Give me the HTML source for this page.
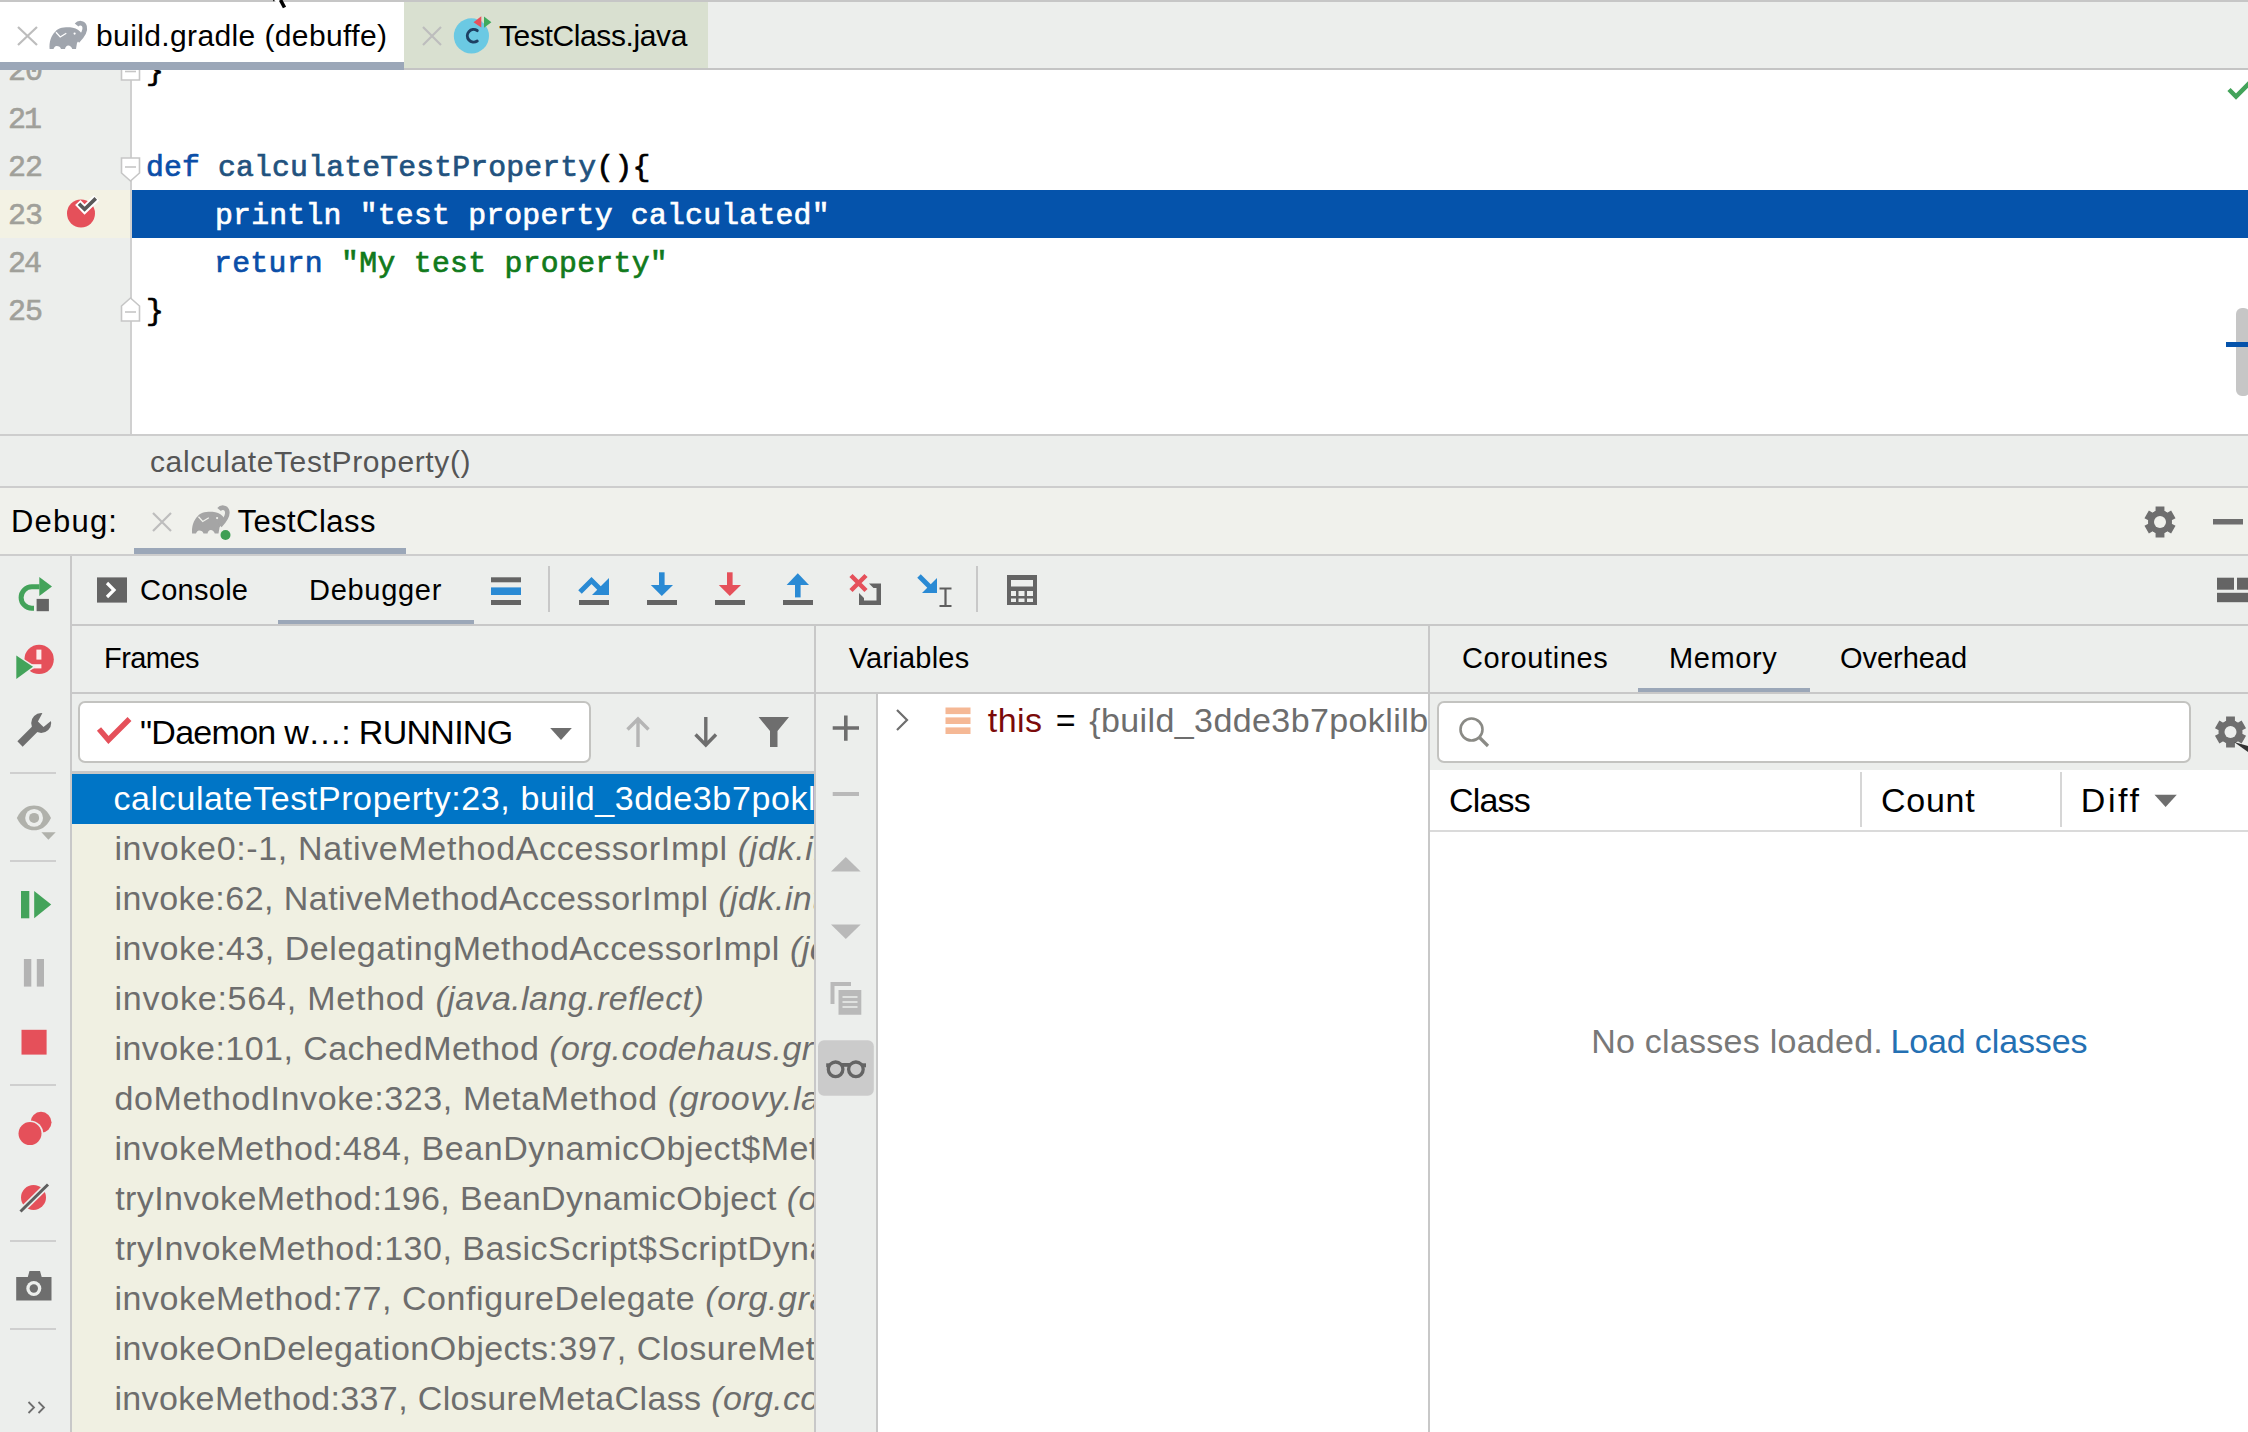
<!DOCTYPE html><html><head><meta charset="utf-8"><title>Debug</title><style>html,body{margin:0;padding:0;width:2248px;height:1432px;overflow:hidden;background:#eceeec}svg{display:block}</style></head><body>
<svg width="2248" height="1432" viewBox="0 0 2248 1432"><defs><clipPath id="clipEd"><rect x="0" y="70" width="2248" height="364"/></clipPath><clipPath id="clipFr"><rect x="72" y="774" width="742" height="658"/></clipPath><clipPath id="clipVar"><rect x="878" y="694" width="550" height="738"/></clipPath></defs>
<rect x="0" y="0" width="2248" height="1432" fill="#eceeec" />
<rect x="0" y="0" width="2248" height="2" fill="#c6c6c6" />
<rect x="0" y="2" width="404" height="60" fill="#ffffff" />
<rect x="0" y="62" width="404" height="8" fill="#9ba7b8" />
<rect x="404" y="2" width="304" height="66" fill="#d9e0d0" />
<rect x="404" y="68" width="1844" height="2" fill="#c4c4c4" />
<rect x="0" y="70" width="130" height="364" fill="#eceeec" />
<rect x="0" y="190" width="130" height="48" fill="#f3f2e4" />
<rect x="130" y="70" width="2" height="364" fill="#d0d0d0" />
<rect x="132" y="70" width="2116" height="364" fill="#ffffff" />
<rect x="132" y="190" width="2116" height="48" fill="#0553ab" />
<rect x="0" y="434" width="2248" height="2" fill="#cdcdcd" />
<rect x="0" y="486" width="2248" height="2" fill="#cdcdcd" />
<rect x="0" y="488" width="2248" height="66" fill="#f0f1ec" />
<rect x="134" y="548" width="272" height="7" fill="#9ba7b8" />
<rect x="0" y="554" width="2248" height="2" fill="#cdcdcd" />
<rect x="70" y="556" width="2" height="876" fill="#c8c8c8" />
<rect x="278" y="620" width="196" height="6" fill="#9ba7b8" />
<rect x="72" y="624" width="2176" height="2" fill="#c8c8c8" />
<rect x="72" y="692" width="742" height="2" fill="#c8c8c8" />
<rect x="79" y="702" width="511" height="60" fill="#ffffff" rx="6" stroke="#c3c3c0" stroke-width="2"/>
<rect x="72" y="771" width="742" height="3" fill="#c8c8c8" />
<rect x="72" y="774" width="742" height="658" fill="#f0f0e2" />
<rect x="72" y="774" width="742" height="50" fill="#0075c6" />
<rect x="814" y="626" width="2" height="806" fill="#c8c8c8" />
<rect x="816" y="692" width="612" height="2" fill="#c8c8c8" />
<rect x="876" y="694" width="2" height="738" fill="#c8c8c8" />
<rect x="878" y="694" width="550" height="738" fill="#ffffff" />
<rect x="1428" y="626" width="2" height="806" fill="#c8c8c8" />
<rect x="1638" y="688" width="172" height="6" fill="#9ba7b8" />
<rect x="1430" y="692" width="818" height="2" fill="#c8c8c8" />
<rect x="1438" y="702" width="752" height="60" fill="#ffffff" rx="6" stroke="#c3c3c0" stroke-width="2"/>
<rect x="1430" y="770" width="818" height="662" fill="#ffffff" />
<rect x="1860" y="772" width="2" height="55" fill="#d6d6d6" />
<rect x="2060" y="772" width="2" height="55" fill="#d6d6d6" />
<rect x="1430" y="830" width="818" height="2" fill="#dadada" />
<rect x="2236" y="308" width="14" height="88" fill="#c6c6c6" rx="6"/>
<rect x="2226" y="342" width="22" height="5" fill="#0553ab" />
<text id="tab1" x="96.00" y="46" font-family="Liberation Sans" font-size="30" xml:space="preserve" textLength="290.98" lengthAdjust="spacing"><tspan fill="#000000">build.gradle (debuffe)</tspan></text>
<text id="tab2" x="499.00" y="46" font-family="Liberation Sans" font-size="30" xml:space="preserve" textLength="188.41" lengthAdjust="spacing"><tspan fill="#000000">TestClass.java</tspan></text>
<text id="ln20" x="8.00" y="80" font-family="Liberation Mono" font-size="30" xml:space="preserve" textLength="35.02" lengthAdjust="spacing" clip-path="url(#clipEd)"><tspan fill="#a0a09a" stroke="#a0a09a" stroke-width="0.6">20</tspan></text>
<text id="ln21" x="8.00" y="128" font-family="Liberation Mono" font-size="30" xml:space="preserve" textLength="34.02" lengthAdjust="spacing" clip-path="url(#clipEd)"><tspan fill="#a0a09a" stroke="#a0a09a" stroke-width="0.6">21</tspan></text>
<text id="ln22" x="8.00" y="176" font-family="Liberation Mono" font-size="30" xml:space="preserve" textLength="35.02" lengthAdjust="spacing" clip-path="url(#clipEd)"><tspan fill="#a0a09a" stroke="#a0a09a" stroke-width="0.6">22</tspan></text>
<text id="ln23" x="8.00" y="224" font-family="Liberation Mono" font-size="30" xml:space="preserve" textLength="35.02" lengthAdjust="spacing" clip-path="url(#clipEd)"><tspan fill="#a0a09a" stroke="#a0a09a" stroke-width="0.6">23</tspan></text>
<text id="ln24" x="8.00" y="272" font-family="Liberation Mono" font-size="30" xml:space="preserve" textLength="34.02" lengthAdjust="spacing" clip-path="url(#clipEd)"><tspan fill="#a0a09a" stroke="#a0a09a" stroke-width="0.6">24</tspan></text>
<text id="ln25" x="8.00" y="320" font-family="Liberation Mono" font-size="30" xml:space="preserve" textLength="35.02" lengthAdjust="spacing" clip-path="url(#clipEd)"><tspan fill="#a0a09a" stroke="#a0a09a" stroke-width="0.6">25</tspan></text>
<text id="l20" x="146.00" y="80" font-family="Liberation Mono" font-size="29.78" xml:space="preserve" clip-path="url(#clipEd)"><tspan fill="#000000" stroke="#000000" stroke-width="0.7">}</tspan></text>
<text id="l22" x="146.00" y="176" font-family="Liberation Mono" font-size="29.78" xml:space="preserve" textLength="504.27" lengthAdjust="spacing"><tspan fill="#0b4ea8" stroke="#0b4ea8" stroke-width="0.7">def</tspan><tspan fill="#000000" stroke="#000000" stroke-width="0.7"> </tspan><tspan fill="#22527e" stroke="#22527e" stroke-width="0.7">calculateTestProperty</tspan><tspan fill="#000000" stroke="#000000" stroke-width="0.7">(){</tspan></text>
<text id="l23" x="215.00" y="224" font-family="Liberation Mono" font-size="29.78" xml:space="preserve" textLength="614.53" lengthAdjust="spacing"><tspan fill="#ffffff" stroke="#ffffff" stroke-width="0.7">println &quot;test property calculated&quot;</tspan></text>
<text id="l24" x="214.00" y="272" font-family="Liberation Mono" font-size="29.78" xml:space="preserve" textLength="453.69" lengthAdjust="spacing"><tspan fill="#0b4ea8" stroke="#0b4ea8" stroke-width="0.7">return</tspan><tspan fill="#000000" stroke="#000000" stroke-width="0.7"> </tspan><tspan fill="#117a1c" stroke="#117a1c" stroke-width="0.7">&quot;My test property&quot;</tspan></text>
<text id="l25" x="146.00" y="320" font-family="Liberation Mono" font-size="29.78" xml:space="preserve"><tspan fill="#000000" stroke="#000000" stroke-width="0.7">}</tspan></text>
<text id="crumb" x="150.00" y="472" font-family="Liberation Sans" font-size="30" xml:space="preserve" textLength="320.50" lengthAdjust="spacing"><tspan fill="#555555">calculateTestProperty()</tspan></text>
<text id="debug" x="11.00" y="532" font-family="Liberation Sans" font-size="31" xml:space="preserve" textLength="105.97" lengthAdjust="spacing"><tspan fill="#000000">Debug:</tspan></text>
<text id="testclass" x="237.50" y="532" font-family="Liberation Sans" font-size="31" xml:space="preserve" textLength="137.88" lengthAdjust="spacing"><tspan fill="#000000">TestClass</tspan></text>
<text id="console" x="140.00" y="599.5" font-family="Liberation Sans" font-size="29" xml:space="preserve" textLength="108.01" lengthAdjust="spacing"><tspan fill="#000000">Console</tspan></text>
<text id="debugger" x="309.00" y="599.5" font-family="Liberation Sans" font-size="29" xml:space="preserve" textLength="132.38" lengthAdjust="spacing"><tspan fill="#000000">Debugger</tspan></text>
<text id="frames" x="104.00" y="668" font-family="Liberation Sans" font-size="29" xml:space="preserve" textLength="95.50" lengthAdjust="spacing"><tspan fill="#000000">Frames</tspan></text>
<text id="variables" x="848.70" y="668" font-family="Liberation Sans" font-size="29" xml:space="preserve" textLength="120.45" lengthAdjust="spacing"><tspan fill="#000000">Variables</tspan></text>
<text id="coroutines" x="1462.00" y="668" font-family="Liberation Sans" font-size="29" xml:space="preserve" textLength="145.85" lengthAdjust="spacing"><tspan fill="#000000">Coroutines</tspan></text>
<text id="memory" x="1669.00" y="668" font-family="Liberation Sans" font-size="29" xml:space="preserve" textLength="107.73" lengthAdjust="spacing"><tspan fill="#000000">Memory</tspan></text>
<text id="overhead" x="1840.00" y="668" font-family="Liberation Sans" font-size="29" xml:space="preserve" textLength="127.06" lengthAdjust="spacing"><tspan fill="#000000">Overhead</tspan></text>
<text id="combo" x="140.00" y="743.5" font-family="Liberation Sans" font-size="34" xml:space="preserve" textLength="373.14" lengthAdjust="spacing"><tspan fill="#000000">&quot;Daemon w…: RUNNING</tspan></text>
<text id="row0" x="113.50" y="810" font-family="Liberation Sans" font-size="34" xml:space="preserve" letter-spacing="0.605" clip-path="url(#clipFr)"><tspan fill="#ffffff">calculateTestProperty:23, build_3dde3b7poklilbl2wfd1xrzx4bm</tspan></text>
<text id="row1" x="114.40" y="860" font-family="Liberation Sans" font-size="34" xml:space="preserve" letter-spacing="0.659" clip-path="url(#clipFr)"><tspan fill="#6d6d6d">invoke0:-1, NativeMethodAccessorImpl </tspan><tspan fill="#6d6d6d" font-style="italic">(jdk.internal.reflect)</tspan></text>
<text id="row2" x="114.40" y="910" font-family="Liberation Sans" font-size="34" xml:space="preserve" letter-spacing="0.450" clip-path="url(#clipFr)"><tspan fill="#6d6d6d">invoke:62, NativeMethodAccessorImpl </tspan><tspan fill="#6d6d6d" font-style="italic">(jdk.internal.reflect)</tspan></text>
<text id="row3" x="114.40" y="960" font-family="Liberation Sans" font-size="34" xml:space="preserve" letter-spacing="0.540" clip-path="url(#clipFr)"><tspan fill="#6d6d6d">invoke:43, DelegatingMethodAccessorImpl </tspan><tspan fill="#6d6d6d" font-style="italic">(jdk.internal.reflect)</tspan></text>
<text id="row4" x="114.40" y="1010" font-family="Liberation Sans" font-size="34" xml:space="preserve" letter-spacing="0.784" clip-path="url(#clipFr)"><tspan fill="#6d6d6d">invoke:564, Method </tspan><tspan fill="#6d6d6d" font-style="italic" letter-spacing="0.414">(java.lang.reflect)</tspan></text>
<text id="row5" x="114.40" y="1060" font-family="Liberation Sans" font-size="34" xml:space="preserve" letter-spacing="0.457" clip-path="url(#clipFr)"><tspan fill="#6d6d6d">invoke:101, CachedMethod </tspan><tspan fill="#6d6d6d" font-style="italic">(org.codehaus.groovy.reflection)</tspan></text>
<text id="row6" x="114.50" y="1110" font-family="Liberation Sans" font-size="34" xml:space="preserve" letter-spacing="0.596" clip-path="url(#clipFr)"><tspan fill="#6d6d6d">doMethodInvoke:323, MetaMethod </tspan><tspan fill="#6d6d6d" font-style="italic">(groovy.lang)</tspan></text>
<text id="row7" x="114.40" y="1160" font-family="Liberation Sans" font-size="34" xml:space="preserve" letter-spacing="0.576" clip-path="url(#clipFr)"><tspan fill="#6d6d6d">invokeMethod:484, BeanDynamicObject$MetaClassAdapter </tspan><tspan fill="#6d6d6d" font-style="italic">(org.gradle)</tspan></text>
<text id="row8" x="115.20" y="1210" font-family="Liberation Sans" font-size="34" xml:space="preserve" letter-spacing="0.403" clip-path="url(#clipFr)"><tspan fill="#6d6d6d">tryInvokeMethod:196, BeanDynamicObject </tspan><tspan fill="#6d6d6d" font-style="italic">(org.gradle.internal.metaobject)</tspan></text>
<text id="row9" x="115.20" y="1260" font-family="Liberation Sans" font-size="34" xml:space="preserve" letter-spacing="0.512" clip-path="url(#clipFr)"><tspan fill="#6d6d6d">tryInvokeMethod:130, BasicScript$ScriptDynamicObject </tspan><tspan fill="#6d6d6d" font-style="italic">(org.gradle)</tspan></text>
<text id="row10" x="114.40" y="1310" font-family="Liberation Sans" font-size="34" xml:space="preserve" letter-spacing="0.574" clip-path="url(#clipFr)"><tspan fill="#6d6d6d">invokeMethod:77, ConfigureDelegate </tspan><tspan fill="#6d6d6d" font-style="italic">(org.gradle.util)</tspan></text>
<text id="row11" x="114.40" y="1360" font-family="Liberation Sans" font-size="34" xml:space="preserve" letter-spacing="0.509" clip-path="url(#clipFr)"><tspan fill="#6d6d6d">invokeOnDelegationObjects:397, ClosureMetaClass </tspan><tspan fill="#6d6d6d" font-style="italic">(org.codehaus)</tspan></text>
<text id="row12" x="114.40" y="1410" font-family="Liberation Sans" font-size="34" xml:space="preserve" letter-spacing="0.368" clip-path="url(#clipFr)"><tspan fill="#6d6d6d">invokeMethod:337, ClosureMetaClass </tspan><tspan fill="#6d6d6d" font-style="italic">(org.codehaus.groovy.runtime)</tspan></text>
<text id="vthis" x="987.80" y="731.5" font-family="Liberation Sans" font-size="34" xml:space="preserve" textLength="54.12" lengthAdjust="spacing"><tspan fill="#7b0a0a">this</tspan></text>
<text id="veq" x="1055.80" y="731.5" font-family="Liberation Sans" font-size="34" xml:space="preserve" textLength="22.26" lengthAdjust="spacing"><tspan fill="#000000">=</tspan></text>
<text id="vval" x="1089.20" y="731.5" font-family="Liberation Sans" font-size="34" xml:space="preserve" letter-spacing="0.400" clip-path="url(#clipVar)"><tspan fill="#6d6d6d">{build_3dde3b7poklilbl2wfd1xrzx4bm@1234}</tspan></text>
<text id="mclass" x="1449.00" y="812" font-family="Liberation Sans" font-size="34" xml:space="preserve" textLength="81.63" lengthAdjust="spacing"><tspan fill="#000000">Class</tspan></text>
<text id="mcount" x="1881.00" y="812" font-family="Liberation Sans" font-size="34" xml:space="preserve" textLength="93.73" lengthAdjust="spacing"><tspan fill="#000000">Count</tspan></text>
<text id="mdiff" x="2080.80" y="812" font-family="Liberation Sans" font-size="34" xml:space="preserve" textLength="58.19" lengthAdjust="spacing"><tspan fill="#000000">Diff</tspan></text>
<text id="nocls" x="1591.20" y="1053" font-family="Liberation Sans" font-size="34" xml:space="preserve" textLength="291.58" lengthAdjust="spacing"><tspan fill="#787878">No classes loaded.</tspan></text>
<text id="loadcls" x="1890.40" y="1053" font-family="Liberation Sans" font-size="34" xml:space="preserve" textLength="197.07" lengthAdjust="spacing"><tspan fill="#2470b3">Load classes</tspan></text>
<path d="M18 27L37 45M37 27L18 45" stroke="#bdbdbd" stroke-width="2.2" fill="none"/>
<g transform="translate(44,16)"><path d="M5.6 33 C5 26 7 19.5 11.5 15.5 C13 12.5 19 11 26 11.3 C30 11.5 33.5 13 36 15.5 L38.5 18.5 L33 27 L32 33 L28.3 33 C27.5 31 26 29.6 24.3 29.6 C22.5 29.6 21.5 31 21 33 L17 33 C16.5 31 15 29.9 12.6 29.9 C11 29.9 10 31.5 9.5 33 Z" fill="#a0a5ad"/><path d="M32.6 9 C34.5 6.5 39.5 6.2 40.6 10.5 C41.8 15 38 20.5 33.5 25" stroke="#a0a5ad" stroke-width="4.6" fill="none"/><path d="M12 16.3 L16.2 21 L22.3 17.3" stroke="#ffffff" stroke-width="1.3" fill="none"/><circle cx="30.6" cy="17.6" r="1.1" fill="#ffffff"/></g>
<path d="M423 27L441 45M441 27L423 45" stroke="#bdbdbd" stroke-width="2.2" fill="none"/>
<circle cx="471.4" cy="35.9" r="17.6" fill="#6bc9e3"/>
<path d="M477.2 30.6 A6.3 6.3 0 1 0 477.2 41" stroke="#1d3f62" stroke-width="3" fill="none" stroke-linecap="round"/>
<path d="M473.5 22.3 L481.3 16.2 L481.3 27.4Z" fill="#e8505b"/><path d="M484 16.5 L491.4 22.3 L484 27.8Z" fill="#3eaa5c"/>
<path d="M274 0 L281 0 L288 8 L283 9Z" fill="#ffffff"/><path d="M280.5 0 L284.5 7.5" stroke="#000" stroke-width="3.6"/><rect x="273" y="0" width="1.5" height="1.2" fill="#222"/>
<circle cx="81" cy="213.5" r="14" fill="#e5505a"/>
<path d="M77.8 202.5 L84.6 209.5 L96.5 197.8" stroke="#ffffff" stroke-width="7.5" fill="none"/>
<path d="M79 203.7 L84.6 209.3 L95.8 198.4" stroke="#595959" stroke-width="3.6" fill="none"/>
<path d="M121.5 158 H139.5 V173 L130.5 181 L121.5 173Z" fill="#ffffff" stroke="#c6c6c6" stroke-width="1.6"/><path d="M125 167 H136" stroke="#c6c6c6" stroke-width="1.6"/>
<path d="M121.5 321 H139.5 V306 L130.5 298 L121.5 306Z" fill="#ffffff" stroke="#c6c6c6" stroke-width="1.6"/><path d="M125 312 H136" stroke="#c6c6c6" stroke-width="1.6"/>
<path d="M121.5 61 V80 H139.5 V61Z" fill="#ffffff" stroke="#c6c6c6" stroke-width="1.6" clip-path="url(#clipEd)"/><path d="M125 71.5 H136" stroke="#c6c6c6" stroke-width="1.6" clip-path="url(#clipEd)"/>
<path d="M2229 89.5 L2236 96.5 L2250 82.5" stroke="#43a35a" stroke-width="4.5" fill="none"/>
<path d="M153 513L171 531M171 513L153 531" stroke="#bdbdbd" stroke-width="2.2" fill="none"/>
<g transform="translate(186.5,500.5)"><path d="M5.6 33 C5 26 7 19.5 11.5 15.5 C13 12.5 19 11 26 11.3 C30 11.5 33.5 13 36 15.5 L38.5 18.5 L33 27 L32 33 L28.3 33 C27.5 31 26 29.6 24.3 29.6 C22.5 29.6 21.5 31 21 33 L17 33 C16.5 31 15 29.9 12.6 29.9 C11 29.9 10 31.5 9.5 33 Z" fill="#a5a5a5"/><path d="M32.6 9 C34.5 6.5 39.5 6.2 40.6 10.5 C41.8 15 38 20.5 33.5 25" stroke="#a5a5a5" stroke-width="4.6" fill="none"/><path d="M12 16.3 L16.2 21 L22.3 17.3" stroke="#f0f1ec" stroke-width="1.3" fill="none"/><circle cx="30.6" cy="17.6" r="1.1" fill="#f0f1ec"/></g>
<circle cx="225.5" cy="535" r="6.3" fill="#f0f1ec"/><circle cx="225.5" cy="535" r="5" fill="#3f9f55"/>
<path d="M2155.59 506.62 L2164.41 506.62 L2164.44 511.02 L2167.29 512.67 L2171.11 510.49 L2175.52 518.13 L2171.72 520.35 L2171.72 523.65 L2175.52 525.87 L2171.11 533.51 L2167.29 531.33 L2164.44 532.98 L2164.41 537.38 L2155.59 537.38 L2155.56 532.98 L2152.71 531.33 L2148.89 533.51 L2144.48 525.87 L2148.28 523.65 L2148.28 520.35 L2144.48 518.13 L2148.89 510.49 L2152.71 512.67 L2155.56 511.02Z" fill="#6e6e6e"/><circle cx="2160" cy="522" r="11.84" fill="#6e6e6e"/><circle cx="2160" cy="522" r="6" fill="#f0f1ec"/>
<rect x="2213" y="519" width="30" height="5.5" fill="#6e6e6e" />
<path d="M39.5 586.8 H31.8 A10.7 10.7 0 0 0 31.8 608.2 H34" stroke="#43a35a" stroke-width="5" fill="none"/>
<path d="M39.3 577.1 L52 586.6 L39.3 596Z" fill="#43a35a"/>
<rect x="36.6" y="598.9" width="12.3" height="12.3" fill="#646464" />
<circle cx="39.1" cy="659.4" r="14.7" fill="#e5505a"/>
<path d="M36.4 649.6 H41.4 V659.6 H36.4Z" fill="#fdecec"/><path d="M30 664.2 H41.4 V668.4 H30Z" fill="#fdecec"/>
<path d="M14.5 653 L36 666.7 L14.5 681Z" fill="#eceeec"/><path d="M16.3 655.4 L33 666.7 L16.3 678.9Z" fill="#43a35a"/>
<path d="M20 744 L36 728" stroke="#6e6e6e" stroke-width="7.5"/>
<circle cx="41.2" cy="723" r="10" fill="#6e6e6e"/><path d="M44.6 709 L54 718.5 L43.5 727 L37.9 721.4Z" fill="#eceeec"/>
<rect x="10" y="772" width="46" height="2" fill="#cfcfcf" />
<path d="M16.8 818 C22 808 28 805.5 34 805.5 C40 805.5 46 808 51 818 C46 828 40 830.3 34 830.3 C28 830.3 22 828 16.8 818Z" fill="#b0b1ab"/><circle cx="34.1" cy="817.9" r="8.9" fill="#eceeec"/><circle cx="34.1" cy="817.9" r="5" fill="#b0b1ab"/>
<path d="M41.4 832.2 H55.7 L48.4 839.7Z" fill="#b0b1ab"/>
<rect x="10" y="860" width="46" height="2" fill="#cfcfcf" />
<rect x="21" y="891" width="8.3" height="27.3" fill="#43a35a" />
<path d="M34.2 891 L51.2 904.6 L34.2 918.3Z" fill="#43a35a"/>
<rect x="23.9" y="959" width="7.4" height="27.6" fill="#b3b3b3" />
<rect x="36.8" y="959" width="7.2" height="27.6" fill="#b3b3b3" />
<rect x="21.5" y="1029.8" width="25.1" height="24.8" fill="#e5505a" />
<rect x="10" y="1084" width="46" height="2" fill="#cfcfcf" />
<circle cx="41" cy="1122.3" r="10.5" fill="#e5505a"/><circle cx="30" cy="1133.6" r="13.2" fill="#eceeec"/><circle cx="30" cy="1133.6" r="11.5" fill="#e5505a"/>
<circle cx="33.5" cy="1197.5" r="12.5" fill="#e5505a"/><path d="M20.5 1211.5 L48 1184.5" stroke="#eceeec" stroke-width="6"/><path d="M20.5 1211.5 L48 1184.5" stroke="#5e5e5e" stroke-width="3"/>
<rect x="10" y="1240" width="46" height="2" fill="#cfcfcf" />
<path d="M16.2 1277 H27.8 L29.5 1271 H40 L41.7 1277 H51.5 V1300.6 H16.2Z" fill="#6e6e6e"/><circle cx="33.8" cy="1288.5" r="7.5" fill="#eceeec"/><circle cx="33.8" cy="1288.5" r="4.2" fill="#6e6e6e"/>
<rect x="10" y="1328" width="46" height="2" fill="#cfcfcf" />
<path d="M28.5 1402 L34 1407.5 L28.5 1413 M38.5 1402 L44 1407.5 L38.5 1413" stroke="#6e6e6e" stroke-width="1.8" fill="none"/>
<rect x="97" y="577.4" width="30" height="25.2" fill="#646464" />
<path d="M107 583 L114 590 L107 597" stroke="#ffffff" stroke-width="3.2" fill="none"/>
<rect x="491" y="577.3" width="30" height="5" fill="#646464" />
<rect x="491" y="587.4" width="30" height="7.6" fill="#2a8ad4" />
<rect x="491" y="600" width="30" height="5" fill="#646464" />
<rect x="548" y="566" width="2" height="46" fill="#c8c8c8" />
<path d="M580 592 L591.5 580.5 L601 590" stroke="#2a8ad4" stroke-width="5" fill="none"/><path d="M609 578 V595 H592Z" fill="#2a8ad4"/>
<rect x="579" y="600" width="30" height="5" fill="#646464" />
<rect x="659" y="572.3" width="5.6" height="15" fill="#2a8ad4" />
<path d="M650.8 585 H673 L661.8 596Z" fill="#2a8ad4"/>
<rect x="647" y="600" width="30" height="5" fill="#646464" />
<rect x="727" y="572.3" width="5.6" height="15" fill="#e5505a" />
<path d="M718.8 585 H741 L729.8 596Z" fill="#e5505a"/>
<rect x="715" y="600" width="30" height="5" fill="#646464" />
<path d="M786.6 585 L797.8 573.3 L809 585Z" fill="#2a8ad4"/>
<rect x="795" y="584" width="5.6" height="13.4" fill="#2a8ad4" />
<rect x="783" y="600" width="30" height="5" fill="#646464" />
<path d="M851 575.5 L866 590.5 M866 575.5 L851 590.5" stroke="#e5505a" stroke-width="4.5"/>
<path d="M869 583.5 H881 V605 H859 V593 L864 598 V600.5 H876.5 V588 H873.5Z" fill="#646464"/>
<path d="M919 576 L931 588" stroke="#2a8ad4" stroke-width="5"/><path d="M937 578 V593 H922Z" fill="#2a8ad4"/>
<path d="M939.5 588.5 H951.5 M939.5 606 H951.5 M945.5 588.5 V606" stroke="#5e5e5e" stroke-width="2.2" fill="none"/>
<rect x="976" y="566" width="2" height="46" fill="#c8c8c8" />
<path d="M1007 575 H1037 V605 H1007Z M1011 580 V586.5 H1033 V580Z M1011 591 V596 H1016 V591Z M1018.5 591 V596 H1024.5 V591Z M1027 591 V596 H1033 V591Z M1011 598.5 V602 H1016 V598.5Z M1018.5 598.5 V602 H1024.5 V598.5Z M1027 598.5 V602 H1033 V598.5Z" fill="#646464" fill-rule="evenodd"/>
<rect x="2217" y="577.7" width="17" height="12" fill="#646464" />
<rect x="2237" y="577.7" width="11" height="12" fill="#646464" />
<rect x="2217" y="592.8" width="31" height="9.4" fill="#646464" />
<path d="M99 729 L108.5 740 L129.5 719" stroke="#e5505a" stroke-width="5.5" fill="none"/>
<path d="M550.2 728 H571.8 L561 740Z" fill="#6e6e6e"/>
<path d="M638 719 V747 M627.5 729.5 L638 719 L648.5 729.5" stroke="#b5b5b5" stroke-width="3.4" fill="none"/>
<path d="M705.8 717 V745 M695.5 734.5 L705.8 745 L716 734.5" stroke="#6e6e6e" stroke-width="3.4" fill="none"/>
<path d="M758.6 717 H789 L777.5 731 V747 H770 V731Z" fill="#6e6e6e"/>
<path d="M845.8 715.4 V740.7 M832.7 728 H859" stroke="#6e6e6e" stroke-width="3.6"/>
<rect x="832.7" y="792" width="26.3" height="4" fill="#b9b9b9" />
<path d="M831 871.5 L845.8 857 L860.7 871.5Z" fill="#b9b9b9"/><path d="M831 924.5 H860.7 L845.8 939Z" fill="#b9b9b9"/>
<path d="M830.5 982 H851 V986 H834.5 V1004 H830.5Z M838.5 990 H861.3 V1014.8 H838.5Z" fill="#b9b9b9"/><path d="M842.5 997 H857.5 M842.5 1002 H857.5 M842.5 1007 H857.5" stroke="#eceeec" stroke-width="1.6"/>
<rect x="818" y="1040.3" width="55.8" height="55.5" fill="#cbcbcb" rx="6"/>
<circle cx="835.6" cy="1069.3" r="7.3" stroke="#646464" stroke-width="3.3" fill="none"/><circle cx="855.9" cy="1069.3" r="7.3" stroke="#646464" stroke-width="3.3" fill="none"/><rect x="842" y="1063" width="8" height="3.8" fill="#646464"/><rect x="826.2" y="1063.3" width="4" height="4" fill="#646464"/><rect x="862" y="1063.3" width="4" height="4" fill="#646464"/>
<path d="M897 710 L907 720 L897 730" stroke="#6e6e6e" stroke-width="2.2" fill="none"/>
<rect x="945.5" y="707.5" width="25" height="6.6" fill="#f5b895" />
<rect x="945.5" y="717.4" width="25" height="6.6" fill="#f5b895" />
<rect x="945.5" y="727.4" width="25" height="6.6" fill="#f5b895" />
<circle cx="1471.5" cy="729.5" r="11" stroke="#8a8a85" stroke-width="2.6" fill="none"/><path d="M1479.5 737.5 L1488 746" stroke="#8a8a85" stroke-width="3.2"/>
<path d="M2226.09 716.62 L2234.91 716.62 L2234.94 721.02 L2237.79 722.67 L2241.61 720.49 L2246.02 728.13 L2242.22 730.35 L2242.22 733.65 L2246.02 735.87 L2241.61 743.51 L2237.79 741.33 L2234.94 742.98 L2234.91 747.38 L2226.09 747.38 L2226.06 742.98 L2223.21 741.33 L2219.39 743.51 L2214.98 735.87 L2218.78 733.65 L2218.78 730.35 L2214.98 728.13 L2219.39 720.49 L2223.21 722.67 L2226.06 721.02Z" fill="#6e6e6e"/><circle cx="2230.5" cy="732" r="11.84" fill="#6e6e6e"/><circle cx="2230.5" cy="732" r="6" fill="#eceeec"/>
<path d="M2234 742 L2248 752 L2248 746Z" fill="#333"/>
<path d="M2154.5 794.8 H2176.8 L2165.6 806.9Z" fill="#6e6e6e"/>
</svg></body></html>
